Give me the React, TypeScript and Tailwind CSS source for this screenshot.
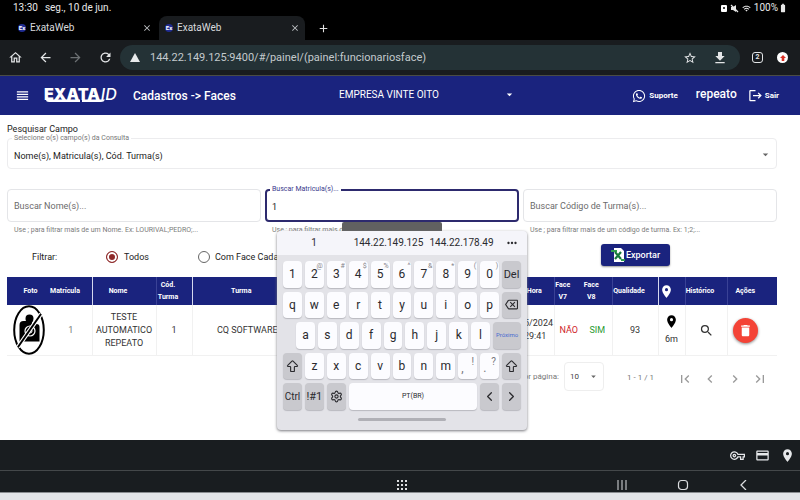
import React from "react";
import {
  MdOutlineHome, MdArrowBack, MdArrowForward, MdRefresh, MdStarBorder, MdPlace, MdDelete, MdSearch,
  MdFirstPage, MdLastPage, MdChevronLeft, MdChevronRight, MdOutlineVpnKey, MdOutlineCreditCard, MdClose, MdAdd,
  MdOutlineBackspace, MdLogout, MdArrowDropDown, MdWifi, MdReorder, MdFileDownload,
  MdMoreHoriz, MdBatteryFull,
} from "react-icons/md";
import { FaWhatsapp } from "react-icons/fa";
import { ArrowBigUp, ChevronLeft, ChevronRight, Settings } from "lucide-react";

function Tab({ active = false }: { active?: boolean }) {
  return (
    <div className={active ? "flex h-6 w-[146px] items-center rounded-t-lg bg-[#191c1f] pl-[6px] pr-[5px]" : "flex h-6 w-[146px] items-center pl-[5px] pr-[7px]"}>
      <span className="flex size-2 items-center justify-center rounded-full bg-[#1f2b8f] text-[6px] font-bold text-white">Ex</span>
      <span className="ml-1 flex-1 text-[10px] text-[#d8dadd]">ExataWeb</span>
      <button aria-label="Fechar aba" className="text-[#c4c7ca]"><MdClose size={10} /></button>
    </div>
  );
}

function Logo() {
  return (
    <div className="relative flex h-[18px] w-[80px] items-start gap-px whitespace-nowrap font-['Inter',sans-serif] text-[16px] leading-[14px] text-white">
      <span className="font-black">EXATA</span>
      <span className="font-medium italic">ID</span>
      <svg className="absolute left-0 top-[11px]" width="62" height="5" viewBox="0 0 62 5">
        <path d="M2 1.5H36V4H5Q2 4 2 1.5ZM38 1.5H61Q60 4 57 4H38Z" fill="#fff" />
      </svg>
    </div>
  );
}

type FieldProps = { id: string; label: string; hint: string; value?: string };

function Field({ id, label, hint, value }: FieldProps) {
  return (
    <div className="min-w-0 flex-1">
      <div className="relative">
        <input
          id={id}
          aria-label={label}
          defaultValue={value}
          placeholder={label}
          className={value
            ? "block h-[33px] w-full rounded border-2 border-[#2d2a6e] bg-white px-[5px] pt-[3px] text-[9px] text-[#222] outline-none"
            : "block h-[33px] w-full rounded border border-[#e4e5e8] bg-white px-[6px] text-[9px] text-[#222] outline-none placeholder:text-[#6b6b6b]"}
        />
        {value && (
          <label htmlFor={id} className="absolute left-[5px] top-[-4px] bg-white pl-[2px] pr-[2px] text-[7px] leading-[9px] text-[#3a3a8c]">{label}</label>
        )}
      </div>
      <p className="mt-1 truncate pl-[7px] text-[7px] leading-[9px] text-[#7b7b7b]">{hint}</p>
    </div>
  );
}

type KeyProps = { children: React.ReactNode; sup?: string; dark?: boolean; className?: string; label?: string };

function Key({ children, sup, dark, className = "flex-1 text-[12px]", label }: KeyProps) {
  return (
    <button
      aria-label={label}
      className={`relative flex min-w-0 items-center justify-center rounded-[4px] shadow-[0_1px_1px_#b9b9bf] ${dark ? "bg-[#c9c9ce]" : "bg-[#fcfcff]"} ${className}`}
    >
      {children}
      {sup && <span className="absolute right-px top-px text-[7px] leading-[8px] text-[#85858a]">{sup}</span>}
    </button>
  );
}

const digits: [string, string][] = [["1", ""], ["2", "@"], ["3", "#"], ["4", "$"], ["5", "%"], ["6", "^"], ["7", "&"], ["8", "*"], ["9", "("], ["0", ")"]];

function PunctuationKey({ main, alt }: { main: string; alt: string }) {
  return (
    <Key>
      <span className="flex h-full w-full justify-between px-[3px] text-[#77777c]">
        <span className="mt-[9px] text-[12px]">{main}</span>
        <span className="mt-[4px] text-[10px]">{alt}</span>
      </span>
    </Key>
  );
}

function Keyboard() {
  return (
    <section aria-label="Teclado" className="absolute left-[277px] top-[231px] w-[250px] rounded-[4px] bg-[#e3e3e8] pb-[9px] text-[#2a2a2e] shadow-[0_1px_3px_#77777d]">
      <div className="grid h-[24px] grid-cols-[74px_75px_71px_1fr] items-center rounded-t-[4px] bg-[#f5f5fa] text-center text-[10px]">
        <span>1</span>
        <span>144.22.149.125</span>
        <span>144.22.178.49</span>
        <button aria-label="Mais opções" className="flex justify-center"><MdMoreHoriz size={14} /></button>
      </div>
      <div className="flex h-[155px] flex-col gap-1 px-[6px] pt-[6px]">
        <div className="flex flex-1 gap-[3px]">
          {digits.map(([d, s]) => <Key key={d} sup={s} className="flex-1 text-[12px]">{d}</Key>)}
          <Key dark className="flex-1 text-[11px]">Del</Key>
        </div>
        <div className="flex flex-1 gap-[3px]">
          {[..."qwertyuiop"].map((c) => <Key key={c}>{c}</Key>)}
          <Key dark label="Apagar"><MdOutlineBackspace size={13} /></Key>
        </div>
        <div className="flex flex-1 gap-[3px] pl-[13px]">
          {[..."asdfghjkl"].map((c) => <Key key={c}>{c}</Key>)}
          <Key dark className="w-[28px] text-[6px] text-[#4a6bd0]">Próximo</Key>
        </div>
        <div className="flex flex-1 gap-[3px]">
          <Key dark label="Maiúsculas"><ArrowBigUp size={15} strokeWidth={1.8} /></Key>
          {[..."zxcvbnm"].map((c) => <Key key={c}>{c}</Key>)}
          <PunctuationKey main="," alt="!" />
          <PunctuationKey main="." alt="?" />
          <Key dark label="Maiúsculas"><ArrowBigUp size={15} strokeWidth={1.8} /></Key>
        </div>
        <div className="grid flex-1 grid-cols-11 gap-[3px]">
          <Key dark className="text-[10px]">Ctrl</Key>
          <Key dark className="text-[11px]">!#1</Key>
          <Key dark label="Configurações"><Settings size={13} strokeWidth={2} /></Key>
          <Key className="col-span-6 text-[7px]">PT(BR)</Key>
          <Key dark label="Anterior"><ChevronLeft size={15} strokeWidth={2} /></Key>
          <Key dark label="Próximo"><ChevronRight size={15} strokeWidth={2} /></Key>
        </div>
      </div>
      <div className="mx-auto mt-[8px] h-[3px] w-[88px] rounded-full bg-[#b0b0b6]" />
    </section>
  );
}

function DataTable() {
  const th = "border-l border-[#d5d8ee] p-0 font-bold";
  const faint = "border-l border-[#3a4296] p-0 pr-3 font-bold";
  const td = "border-l border-[#f1f1f1] p-0";
  return (
    <table className="w-full table-fixed border-collapse text-center">
      <colgroup>
        <col className="w-[43px]" /><col className="w-[42px]" /><col className="w-[64px]" /><col className="w-[36px]" />
        <col className="w-[98px]" /><col /><col className="w-[56px]" /><col className="w-[29px]" /><col className="w-[29px]" />
        <col className="w-[46px]" /><col className="w-[27px]" /><col className="w-[42px]" /><col className="w-[50px]" />
      </colgroup>
      <thead>
        <tr className="h-[28px] bg-[#1a237e] text-[7px] leading-[12px] text-white">
          <th className="p-0 pl-1 font-bold">Foto</th>
          <th className="p-0 pr-3 font-bold">Matrícula</th>
          <th className="border-l border-[#d5d8ee] p-0 pr-3 font-bold">Nome</th>
          <th className={faint}>Cód. Turma</th>
          <th className={th}>Turma</th>
          <th className="p-0" />
          <th className="p-0 font-bold">Data/Hora</th>
          <th className="border-l border-[#3a4296] p-0 pr-3 font-bold">Face V7</th>
          <th className="p-0 pr-3 font-bold">Face V8</th>
          <th className={faint}>Qualidade</th>
          <th className={th} aria-label="Localização"><MdPlace size={15} /></th>
          <th className={faint}>Histórico</th>
          <th className="border-l border-[#3a4296] p-0 pr-[14px] font-bold">Ações</th>
        </tr>
      </thead>
      <tbody>
        <tr className="h-[49px] border-b border-[#f1f1f1] text-[9px] leading-[13px] text-[#333]">
          <td className="p-0">
            <svg aria-label="Sem foto" className="mx-auto" width="32" height="50" viewBox="0 0 32 50">
              <ellipse cx="16" cy="25" rx="14.8" ry="23.8" fill="#fff" stroke="#000" strokeWidth="2" />
              <path d="M12.5 13.5Q12.5 9.5 16.5 9.5Q20.5 9.5 20.5 13.5Q20.5 16 19 17.5V19H23.5Q26.5 19 26.5 22V36.5H6.5V20Q6.5 16 10.5 16H13Q12.5 15 12.5 13.5Z" fill="#000" />
              <circle cx="17" cy="26" r="5" fill="none" stroke="#fff" strokeWidth="1.2" />
              <circle cx="17" cy="26" r="2" fill="none" stroke="#fff" strokeWidth="1" />
              <path d="M28 9L5 42" stroke="#fff" strokeWidth="4" />
              <path d="M28 9L5 42" stroke="#000" strokeWidth="2" />
            </svg>
          </td>
          <td className="p-0 text-[#777]">1</td>
          <td className={td}>TESTE AUTOMATICO REPEATO</td>
          <td className={td}>1</td>
          <td className="border-l border-[#f1f1f1] p-0 pl-3">CQ SOFTWARE</td>
          <td className="p-0" />
          <td className="p-0 pl-[26px] text-left">5/2024 29:41</td>
          <td className="border-l border-[#f1f1f1] p-0 text-[#d0262b]">NÃO</td>
          <td className="p-0 text-[#2a9a32]">SIM</td>
          <td className={td}>93</td>
          <td className={td}>
            <MdPlace size={15} className="mx-auto text-black" />
            <div className="mt-1">6m</div>
          </td>
          <td className={td}><button aria-label="Histórico" className="align-middle"><MdSearch size={15} /></button></td>
          <td className="border-l border-[#f1f1f1] p-0 pr-[14px]">
            <button aria-label="Excluir" className="inline-flex size-[25px] items-center justify-center rounded-full bg-[#f44336] align-middle text-white shadow-[0_1px_3px_#888]"><MdDelete size={15} /></button>
          </td>
        </tr>
      </tbody>
    </table>
  );
}

export default function App() {
  return (
    <div className="relative flex min-h-screen flex-col bg-white font-['Roboto',sans-serif] leading-none text-[#222]">
      <div className="flex h-4 items-center bg-black pl-[13px] pr-3 text-[10px] text-[#e8e8e8]">
        <span>13:30</span>
        <span className="ml-[7px] flex-1">seg., 10 de jun.</span>
        <div className="flex items-center gap-[3px]">
          <span className="flex h-[7px] w-[6px] items-center justify-center rounded-[1px] bg-white"><span className="size-[2px] rounded-full bg-black" /></span>
          <svg width="9" height="9" viewBox="0 0 9 9">
            <path d="M1 3H3L6 1V8L3 6H1Z" fill="#e8e8e8" />
            <path d="M1 1L8 8" stroke="#e8e8e8" strokeWidth="1.2" />
          </svg>
          <MdWifi size={9} />
          <span className="flex items-center">100%<MdBatteryFull size={10} /></span>
        </div>
      </div>

      <div className="flex h-6 items-center bg-black pl-[13px]">
        <Tab />
        <Tab active />
        <button aria-label="Nova aba" className="ml-3 text-[#e0e0e0]"><MdAdd size={13} /></button>
      </div>

      <nav className="flex h-9 items-center border-b border-[#4a4c45] bg-[#191c1f] text-[#e3e5e7]">
        <div className="flex w-[120px] items-center gap-[15px] pl-[8px]">
          <button aria-label="Início"><MdOutlineHome size={15} /></button>
          <button aria-label="Voltar"><MdArrowBack size={15} /></button>
          <button aria-label="Avançar" className="text-[#6c7073]"><MdArrowForward size={15} /></button>
          <button aria-label="Recarregar"><MdRefresh size={15} /></button>
        </div>
        <div className="flex h-[25px] flex-1 items-center rounded-full bg-[#243236] pl-[10px] pr-[12px]">
          <svg width="10" height="9" viewBox="0 0 10 9"><path d="M5 0L10 9H0Z" fill="#e8eaec" /></svg>
          <input aria-label="Endereço" defaultValue="144.22.149.125:9400/#/painel/(painel:funcionariosface)" className="ml-[10px] min-w-0 flex-1 bg-transparent text-[11px] text-[#c3cacd] outline-none" />
          <button aria-label="Favoritar"><MdStarBorder size={14} /></button>
          <button aria-label="Baixar" className="ml-[15px]"><MdFileDownload size={16} /></button>
        </div>
        <button className="ml-3 flex size-[11px] items-center justify-center rounded-[3px] border border-[#e3e5e7] text-[7px] font-bold">2</button>
        <button aria-label="Atualização" className="ml-[14px] mr-3 flex size-[11px] items-center justify-center rounded-full bg-white">
          <svg width="6" height="6" viewBox="0 0 7 7"><path d="M3.5 0L7 3.5H5V7H2V3.5H0Z" fill="#d93025" /></svg>
        </button>
      </nav>

      <header className="flex h-[39px] items-center bg-[#1a237e] text-white">
        <button aria-label="Menu" className="ml-[15px]"><MdReorder size={15} /></button>
        <div className="ml-[14px]"><Logo /></div>
        <h1 className="ml-[9px] w-[206px] text-[12px] font-medium">Cadastros -&gt; Faces</h1>
        <button className="flex w-[177px] items-center justify-between pb-[2px] text-[10px]">EMPRESA VINTE OITO<MdArrowDropDown size={13} /></button>
        <div className="ml-auto flex items-center pr-[21px]">
          <a href="#suporte" className="flex items-center gap-[3px] text-[8px] font-bold"><FaWhatsapp size={14} />Suporte</a>
          <span className="ml-[18px] pb-[3px] text-[12px] font-medium">repeato</span>
          <a href="#sair" className="ml-[11px] flex items-center gap-[2px] text-[8px] font-bold"><MdLogout size={15} />Sair</a>
        </div>
      </header>

      <main className="flex-1 pl-[7px] pr-[23px] pt-[9px]">
        <div className="text-[9px] leading-[11px]">Pesquisar Campo</div>
        <div className="relative mt-[3px]">
          <label htmlFor="campos" className="absolute left-[5px] top-[-4px] bg-white px-[2px] text-[7px] leading-[9px] text-[#777]">Selecione o(s) campo(s) da Consulta</label>
          <select id="campos" className="h-[31px] w-full appearance-none rounded border border-[#ececee] bg-white px-[6px] pt-[5px] text-[9px]">
            <option>Nome(s), Matricula(s), Cód. Turma(s)</option>
          </select>
          <MdArrowDropDown size={13} className="pointer-events-none absolute right-[5px] top-[10px] text-[#666]" />
        </div>

        <div className="mt-5 flex gap-1">
          <Field id="nome" label="Buscar Nome(s)..." hint="Use ; para filtrar mais de um Nome. Ex: LOURIVAL;PEDRO;..." />
          <Field id="matricula" label="Buscar Matricula(s)..." value="1" hint="Use ; para filtrar mais de" />
          <Field id="turma" label="Buscar Código de Turma(s)..." hint="Use ; para filtrar mais de um código de turma. Ex: 1;2;..." />
        </div>

        <div className="mt-[9px] flex h-[26px] items-center pl-[25px] text-[9px]">
          <span className="w-[74px]">Filtrar:</span>
          <label className="flex w-[92px] items-center gap-[6px]">
            <input type="radio" name="filtro" defaultChecked className="size-3 appearance-none rounded-full border border-[#8f2a2a] bg-[#8f2a2a] shadow-[inset_0_0_0_2px_white]" />
            Todos
          </label>
          <label className="flex items-center gap-[5px]">
            <input type="radio" name="filtro" className="size-3 appearance-none rounded-full border border-[#666] bg-white" />
            Com Face Cada
          </label>
          <button className="ml-auto mr-[107px] flex h-[22px] w-[69px] items-center justify-center gap-px self-start rounded-[3px] bg-[#1a237e] text-[9px] font-medium text-white shadow-[0_1px_2px_#999]">
            <svg width="14" height="14" viewBox="0 0 14 14">
              <path d="M3 0H10L13 3V14H3Z" fill="#fff" />
              <path d="M0 3H6M10 12H14" stroke="#2e9e4f" strokeWidth="2" />
              <path d="M4 4L10 11M10 4L4 11" stroke="#187a3b" strokeWidth="2.2" />
            </svg>
            Exportar
          </button>
        </div>

        <div className="mt-[7px]"><DataTable /></div>

        <div className="mt-[5px] flex h-[30px] items-center justify-end pr-[9px] text-[8px] text-[#777]">
          <label htmlFor="itens" className="pt-[2px]">Itens por página:</label>
          <div className="relative ml-[5px]">
            <select id="itens" className="block h-[29px] w-[40px] appearance-none rounded border border-[#eeeeee] bg-white pl-[5px] pt-[2px] text-[8px] text-[#444]"><option>10</option></select>
            <MdArrowDropDown size={11} className="pointer-events-none absolute right-[5px] top-[9px] text-[#666]" />
          </div>
          <span className="ml-[23px] w-[50px] pt-[4px]">1 - 1 / 1</span>
          <div className="flex gap-[9px] pt-[6px] text-[#9a9a9a]">
            <button aria-label="Primeira página"><MdFirstPage size={16} /></button>
            <button aria-label="Página anterior"><MdChevronLeft size={16} /></button>
            <button aria-label="Próxima página"><MdChevronRight size={16} /></button>
            <button aria-label="Última página"><MdLastPage size={16} /></button>
          </div>
        </div>
      </main>

      <div className="flex h-[30px] items-center justify-end gap-[10px] bg-[#191d20] pr-[5px] text-[#e6e8ea]">
        <button aria-label="Senhas"><MdOutlineVpnKey size={15} /></button>
        <button aria-label="Cartões"><MdOutlineCreditCard size={15} /></button>
        <button aria-label="Endereços"><MdPlace size={15} /></button>
      </div>
      <div className="grid h-[22px] grid-cols-[1fr_auto_1fr] items-center border-t border-[#44484a] bg-[#191d20] pt-[7px] text-[#dcdee0]">
        <span />
        <button aria-label="Aplicativos" className="pl-1">
          <svg width="11" height="11" viewBox="0 0 11 11" fill="currentColor">
            <path d="M0 0H2V2H0ZM4 0H6V2H4ZM8 0H10V2H8ZM0 4H2V6H0ZM4 4H6V6H4ZM8 4H10V6H8ZM0 8H2V10H0ZM4 8H6V10H4ZM8 8H10V10H8Z" />
          </svg>
        </button>
        <div className="flex items-center justify-end gap-[50px] pr-[51px]">
          <button aria-label="Recentes">
            <svg width="10" height="10" viewBox="0 0 10 10"><path d="M1 0V10M5 0V10M9 0V10" stroke="currentColor" strokeWidth="1" /></svg>
          </button>
          <button aria-label="Tela inicial">
            <svg width="12" height="12" viewBox="0 0 12 12"><rect x="1.5" y="1.5" width="9" height="9" rx="3" fill="none" stroke="currentColor" strokeWidth="1.2" /></svg>
          </button>
          <button aria-label="Voltar">
            <svg width="10" height="10" viewBox="0 0 10 10"><path d="M7 0L2 5L7 10" fill="none" stroke="currentColor" strokeWidth="1.3" /></svg>
          </button>
        </div>
      </div>
      <div className="h-2 border-t border-[#8a8d90] bg-[#e3e5e8]" />

      <div className="absolute left-[342px] top-[222px] h-[10px] w-[100px] rounded-t-[2px] bg-[#616161]" />
      <Keyboard />
    </div>
  );
}
